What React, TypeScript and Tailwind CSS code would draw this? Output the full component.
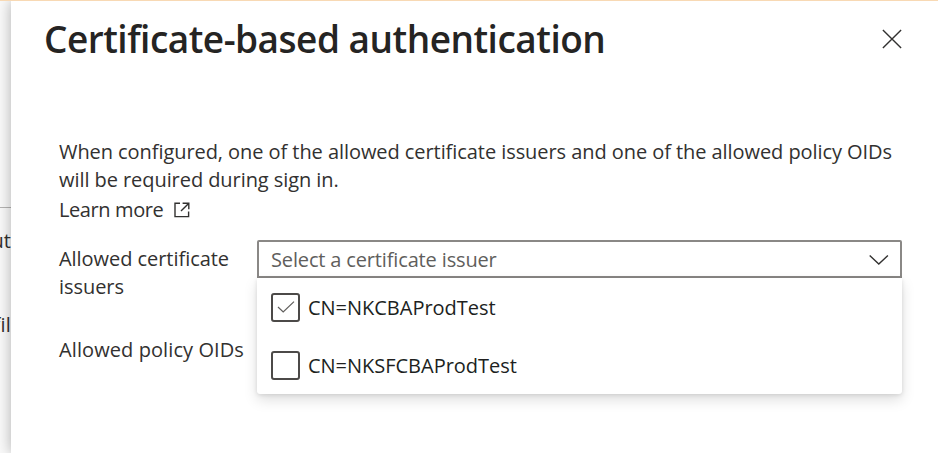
import React from "react";

function CloseIcon() {
  return (
    <svg className="h-5 w-5" viewBox="0 0 20 20" fill="none" stroke="#323130" strokeWidth="1.4">
      <path d="M0.9 0.9 19.1 19.1M19.1 0.9 0.9 19.1" />
    </svg>
  );
}

function ExternalIcon() {
  return (
    <svg className="h-4 w-4" viewBox="0 0 16 16" fill="none" stroke="#323130" strokeWidth="1.4">
      <path d="M6 1.2H1V14.6H14.6V9.6M8.6 1.2H14.8V7.2M14.6 1.4 7 9" />
    </svg>
  );
}

function ChevronIcon() {
  return (
    <svg className="mt-0.5 h-[10px] w-5" viewBox="0 0 20 10" fill="none" stroke="#323130" strokeWidth="1.4">
      <path d="M0.7 0.5 9.8 9 18.9 0.5" />
    </svg>
  );
}

function Option({ checked, children }: { checked?: boolean; children: React.ReactNode }) {
  return (
    <div className="flex h-[58px] items-center pl-[14px]">
      <span className="flex h-[29px] w-[29px] shrink-0 items-center justify-center rounded-[3px] border-2 border-[#4c4a48]">
        {checked && (
          <svg className="h-3 w-[18px]" viewBox="0 0 18 12" fill="none" stroke="#605e5c" strokeWidth="1.2">
            <path d="M1 6 6.2 11 17 0.6" />
          </svg>
        )}
      </span>
      <span className="ml-2 whitespace-nowrap pt-0.5 tracking-[-0.02px] text-[#201f1e]">{children}</span>
    </div>
  );
}

export default function App() {
  return (
    <div className="flex h-[453px] w-[938px] overflow-hidden border-t border-[#f8d9b4] bg-[#fafafa] font-['Open_Sans','Noto_Sans',sans-serif] text-[20px] leading-[28px] text-[#323130]">
      <aside className="flex w-[11px] shrink-0 flex-col items-end overflow-hidden">
        <div className="h-[207px] w-full shrink-0 border-b border-[#b5b4b3]" />
        <div className="mt-[19px] whitespace-nowrap">ut</div>
        <div className="mt-[56px] whitespace-nowrap tracking-[0.2px]">fil</div>
      </aside>
      <main className="min-w-0 flex-1 bg-white shadow-[0_0_14px_rgba(0,0,0,0.3)]">
        <header className="flex h-[76px] items-center justify-between pl-[33px] pr-[36px]">
          <h1 className="whitespace-nowrap text-[37px] font-semibold leading-[50px] tracking-[-0.5px] text-[#252423]">
            Certificate-based authentication
          </h1>
          <CloseIcon />
        </header>
        <section className="pl-12 pr-9 pt-[61px]">
          <p className="whitespace-nowrap tracking-[-0.065px]">
            <span className="block">When configured, one of the allowed certificate issuers and one of the allowed policy OIDs</span>
            <span className="block">will be required during sign in.</span>
          </p>
          <a className="mt-[2px] flex items-center">
            <span className="mr-[11px] tracking-[-0.4px]">Learn more</span>
            <ExternalIcon />
          </a>
          <div className="mt-4 flex">
            <div className="w-[198px] shrink-0">
              <div className="mt-[5px] w-[190px] tracking-[-0.05px]">Allowed certificate issuers</div>
              <div className="mt-[35px] whitespace-nowrap tracking-[0.09px]">Allowed policy OIDs</div>
            </div>
            <div className="w-[645px] shrink-0">
              <div className="flex h-[38px] items-center justify-between rounded-t-[2px] border-2 border-[#8a8886] pl-3 pr-[11px] text-[#605e5c]">
                <span className="pt-px tracking-[-0.15px]">Select a certificate issuer</span>
                <ChevronIcon />
              </div>
              <div className="h-[116px] rounded-b-[3px] bg-white shadow-[0_6px_14px_rgba(0,0,0,0.13),0_1px_4px_rgba(0,0,0,0.11)]">
                <Option checked>CN=NKCBAProdTest</Option>
                <Option>CN=NKSFCBAProdTest</Option>
              </div>
            </div>
          </div>
        </section>
      </main>
    </div>
  );
}
